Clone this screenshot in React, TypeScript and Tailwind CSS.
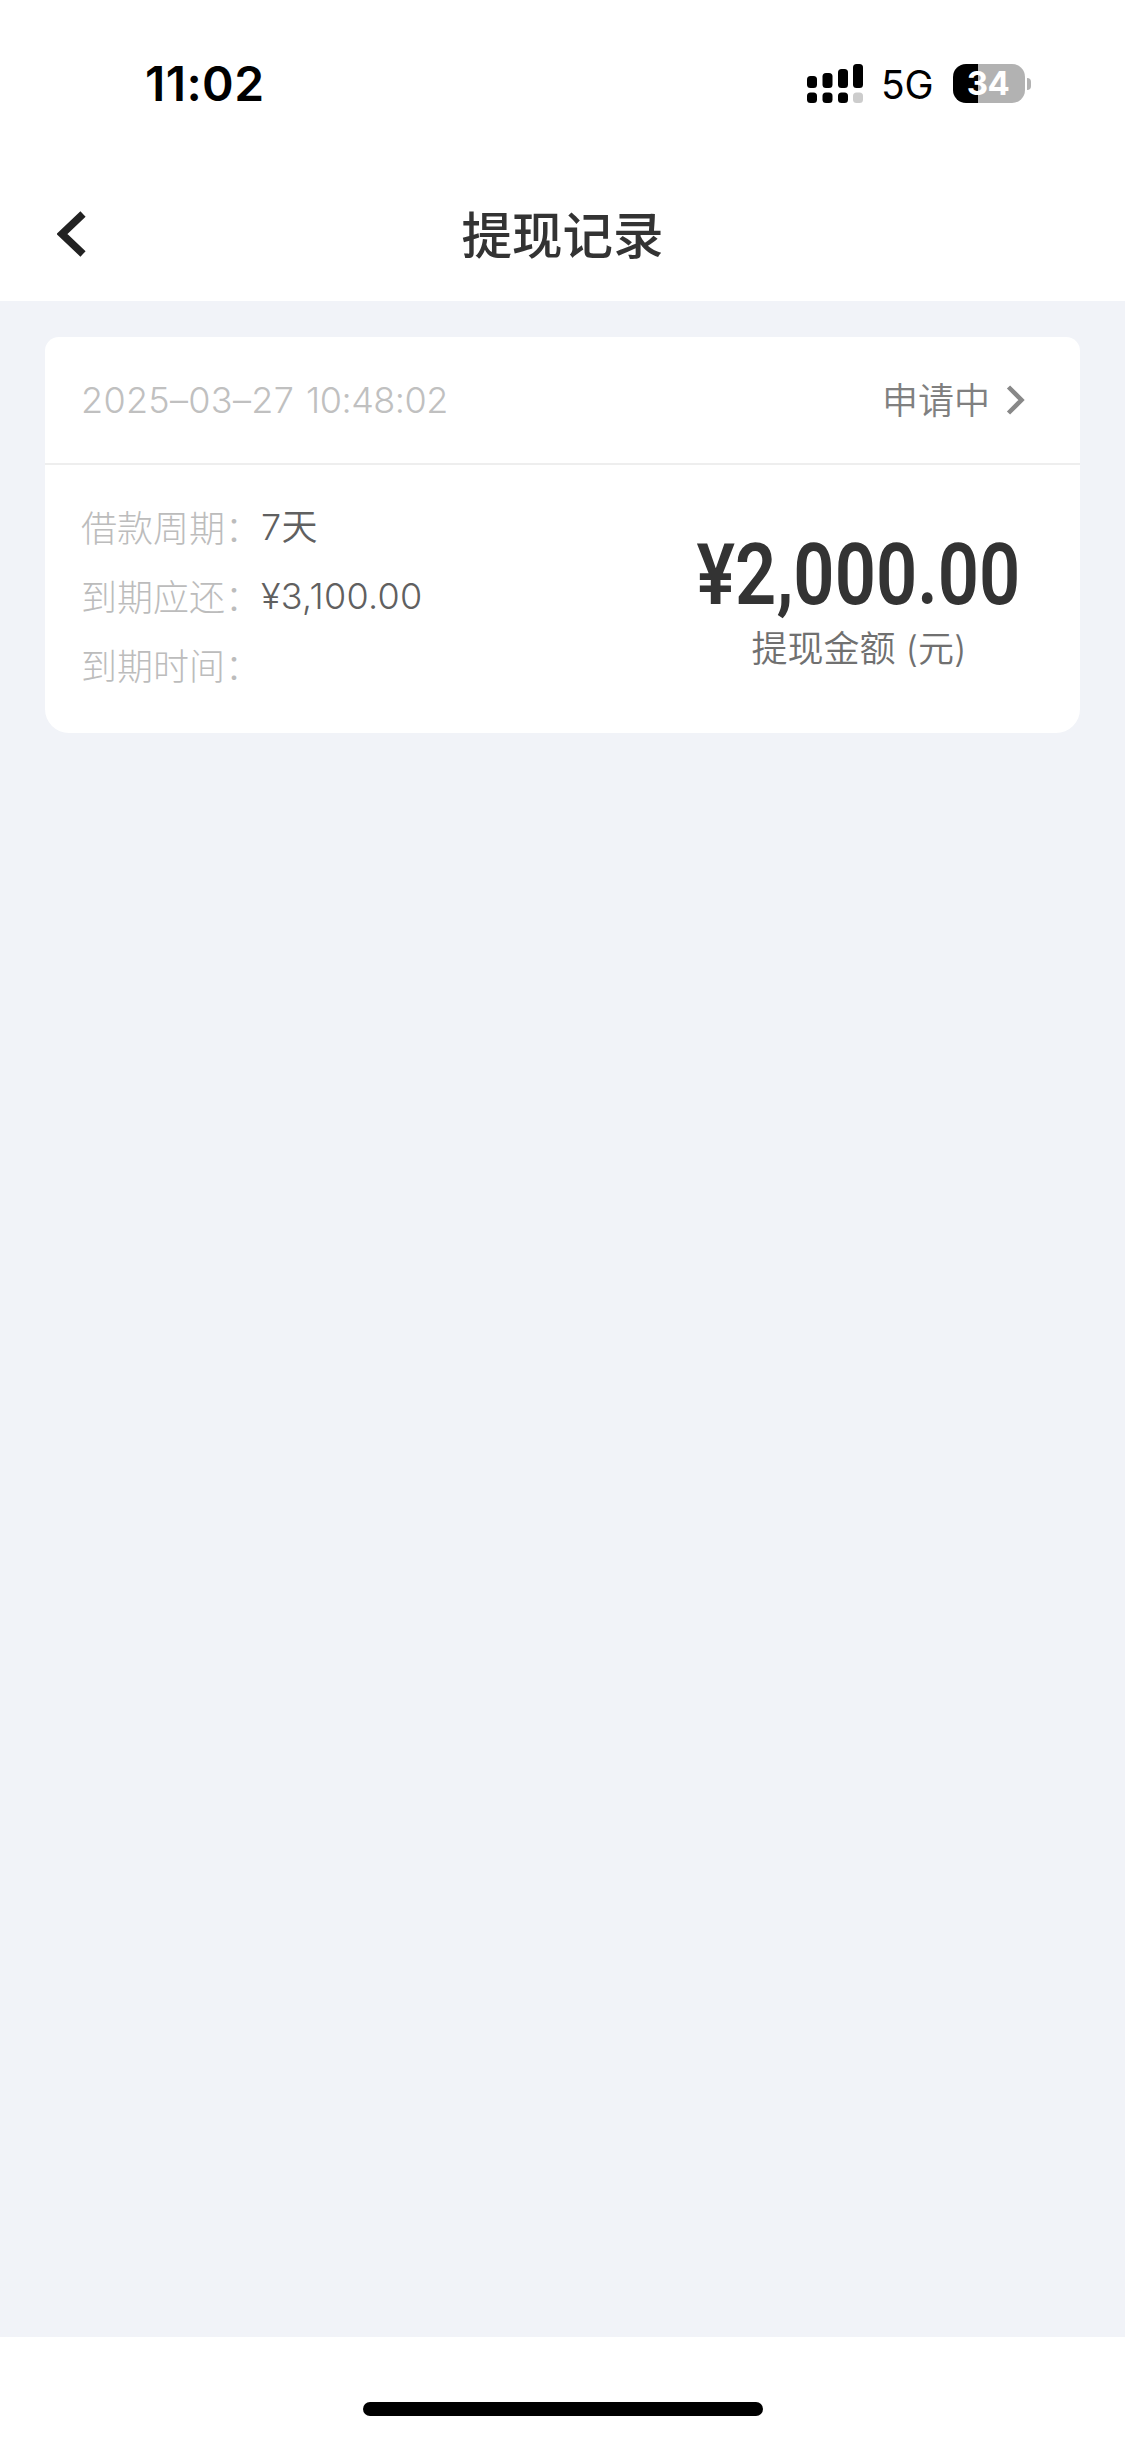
/**
 * Withdrawal Records Page
 * Status bar, page header and the list of withdrawal records
 */

const records = [
  {
    id: 1,
    date: '2025–03–27',
    time: '10:48:02',
    status: '申请中',
    amount: '¥2,000.00',
    details: [
      { label: '借款周期', value: '7天' },
      { label: '到期应还', value: '¥3,100.00' },
      { label: '到期时间', value: '' },
    ],
  },
];

function SignalIcon() {
  return (
    <svg width="56" height="39" viewBox="0 0 56 39" fill="black">
      <rect x="0" y="12" width="10" height="12" rx="3.5" />
      <rect x="15.5" y="9" width="10" height="15" rx="3.5" />
      <rect x="31" y="5" width="10" height="19" rx="3.5" />
      <rect x="46" y="0" width="10" height="24" rx="3.5" />
      <rect x="0" y="28.5" width="10" height="10.5" rx="3.5" />
      <rect x="15.5" y="28.5" width="10" height="10.5" rx="3.5" />
      <rect x="31" y="28.5" width="10" height="10.5" rx="3.5" />
      <rect x="46" y="28.5" width="10" height="10.5" rx="3.5" fill="#cccccc" />
    </svg>
  );
}

function StatusBar() {
  return (
    <div className="flex h-[168px] items-start justify-between pr-[94px] pl-[145px] pt-[54px]">
      <span className="text-[48px] leading-[60px] font-semibold tracking-[0.4px] text-black">11:02</span>
      <div className="flex items-center pt-[10px]">
        <SignalIcon />
        <span className="ml-[18px] w-[54px] pt-[2px] text-[39px] leading-[37px] tracking-[-0.3px] text-black">5G</span>
        {/* Battery */}
        <div className="ml-[18px] flex h-[39px] w-[72px] items-center justify-center rounded-[13px] bg-[linear-gradient(90deg,#000_25px,#b2b2b2_25px)]">
          <span className="pr-[2px] text-[33px] leading-none font-bold tracking-[-0.5px] text-white">34</span>
        </div>
        <div className="ml-[2px] h-[12px] w-[4px] rounded-r-full bg-[#b2b2b2]" />
      </div>
    </div>
  );
}

function Header() {
  return (
    <header className="grid h-[133px] grid-cols-[120px_1fr_120px] items-center">
      <button className="pb-[2px] pl-[57px]">
        <svg width="30" height="46" viewBox="0 0 30 46" fill="none" stroke="#222222" strokeWidth="7.5">
          <path d="M26 3 5 23 26 43" strokeLinejoin="miter" />
        </svg>
      </button>
      <h1 className="pt-[2px] text-center text-[50.5px] leading-[72px] font-medium text-[#333333]">提现记录</h1>
    </header>
  );
}

function RecordCard({ record }: { record: (typeof records)[number] }) {
  return (
    <div className="rounded-t-[14px] rounded-b-[24px] bg-white">
      {/* Card Header */}
      <div className="flex h-[128px] items-center justify-between border-b-2 border-[#eeeeee] pr-[54px] pl-[36px]">
        <div className="flex gap-[12px] text-[36px] font-light text-[#c0c0c0]">
          <span className="tracking-[0.3px]">{record.date}</span>
          <span className="tracking-[-0.5px]">{record.time}</span>
        </div>
        <div className="flex items-center">
          <span className="pt-[1px] text-[36px] font-[350] text-[#808080]">{record.status}</span>
          <svg className="ml-[16px]" width="20" height="30" viewBox="0 0 20 30" fill="none" stroke="#888888" strokeWidth="4.5">
            <path d="M2.5 2 15.5 15 2.5 28" />
          </svg>
        </div>
      </div>

      {/* Card Body */}
      <div className="flex h-[268px] justify-between pr-[60px] pl-[36px]">
        <ul className="pt-[28px]">
          {record.details.map((item) => (
            <li key={item.label} className="flex h-[69px] items-center text-[36px] whitespace-nowrap">
              <span className="w-[180px] pt-[2px] font-light text-[#bcbcbc]">{item.label}：</span>
              <span className="pb-[1px] font-[350] tracking-[0.3px] text-[#606060]">{item.value}</span>
            </li>
          ))}
        </ul>
        <div className="flex w-[324px] flex-col items-center pt-[65px]">
          <p className="origin-center scale-x-[0.85] font-[Roboto] text-[85px] leading-[90px] font-semibold whitespace-nowrap text-[#333333]">
            {record.amount}
          </p>
          <p className="mt-[2px] pl-[2px] text-[36px] leading-[54px] font-[350] text-[#707070]">提现金额 (元)</p>
        </div>
      </div>
    </div>
  );
}

export default function App() {
  return (
    <div className="flex h-[2439px] w-[1125px] flex-col bg-white font-[Inter,'Noto_Sans_CJK_SC',sans-serif]">
      <StatusBar />
      <Header />
      <main className="flex-1 bg-[#f1f3f8] px-[45px] pt-[36px]">
        {records.map((record) => (
          <RecordCard key={record.id} record={record} />
        ))}
      </main>
      {/* Home Indicator */}
      <footer className="flex h-[102px] justify-center bg-white pt-[65px]">
        <div className="h-[14px] w-[400px] rounded-full bg-black" />
      </footer>
    </div>
  );
}
